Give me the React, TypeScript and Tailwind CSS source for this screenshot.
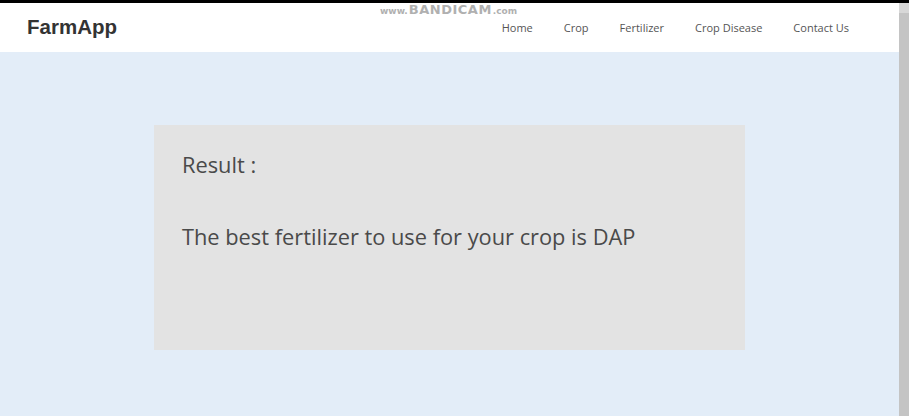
export default function App() {
  const links = ["Home", "Crop", "Fertilizer", "Crop Disease", "Contact Us"];
  return (
    <div className="h-[416px] w-[909px] flex flex-col bg-black overflow-hidden">
      <div className="h-[3px] shrink-0 bg-black" />
      <div className="flex flex-1 min-h-0">
        <div className="flex-1 flex flex-col bg-[#e3edf8] relative">
          <div className="absolute left-[380px] top-0 flex items-end gap-[1px] leading-none font-bold text-[#b0b0b0] [font-family:'DejaVu_Sans',sans-serif]">
            <span className="text-[9px]">www.</span>
            <span className="text-[13px] tracking-[0.5px]">BANDICAM</span>
            <span className="text-[9px]">.com</span>
          </div>
          <header className="h-[49px] bg-white flex items-center justify-between pl-[27px] pr-[50px]">
            <span className="text-[20.5px] font-bold text-[#333] [font-family:'Liberation_Sans',Arial,sans-serif]">
              FarmApp
            </span>
            <nav className="flex gap-[31px] text-[11px] text-[#555] pt-[2px] [font-family:'Open_Sans',sans-serif]">
              {links.map((l) => (
                <a key={l} href="#">
                  {l}
                </a>
              ))}
            </nav>
          </header>
          <main className="flex-1 flex justify-center pt-[73px]">
            <div className="w-[591px] h-[225px] bg-[#e3e3e3] pl-[28px] pt-[25px] text-[#4a4a4a] [font-family:'Open_Sans',sans-serif]">
              <p className="text-[21.8px] leading-[30px]">Result :</p>
              <p className="text-[21.8px] leading-[30px] mt-[42px]">
                The best fertilizer to use for your crop is DAP
              </p>
            </div>
          </main>
        </div>
        <div className="w-[10px] bg-[#c4c4c4] flex flex-col">
          <div className="h-[10px] bg-[#d8d8d8]" />
        </div>
      </div>
    </div>
  );
}
